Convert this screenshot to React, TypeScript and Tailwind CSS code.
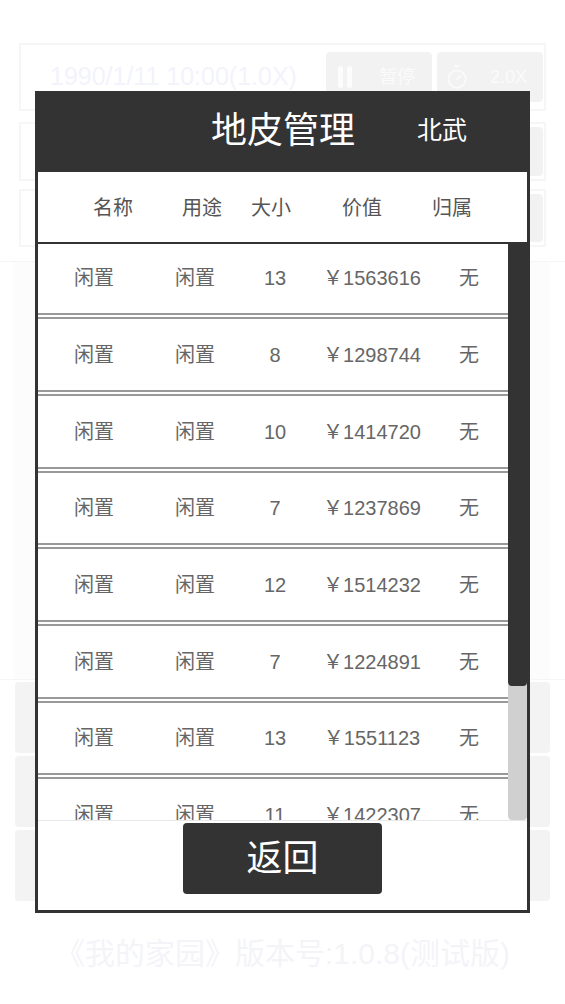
import { Timer } from 'lucide-react';

const rows = [
  { size: '13', price: '1563616' },
  { size: '8', price: '1298744' },
  { size: '10', price: '1414720' },
  { size: '7', price: '1237869' },
  { size: '12', price: '1514232' },
  { size: '7', price: '1224891' },
  { size: '13', price: '1551123' },
  { size: '11', price: '1422307' },
];

const font = 'font-["Liberation_Sans","Noto_Sans_CJK_SC",sans-serif]';

export default function App() {
  return (
    <div className={`relative h-[1004px] w-[565px] overflow-hidden bg-white ${font}`}>
      {/* Page behind the dialog, washed out */}
      <div className="flex flex-col pt-[43px]">
        <div className="mx-[19px] flex h-[68px] items-center justify-between border-2 border-[#f6f6f6] pl-[29px] pr-[1px]">
          <span className="text-[25px] text-[#f3f3fc]">1990/1/11 10:00(1.0X)</span>
          <div className="flex gap-[5px]">
            <div className="flex h-[50px] w-[106px] items-center gap-[27px] rounded bg-[#f2f2f2] pl-[12px] text-[#fbfbfb]">
              <div className="flex gap-[4px]">
                <div className="h-[22px] w-[5px] rounded-full bg-[#fcfcfc]" />
                <div className="h-[22px] w-[5px] rounded-full bg-[#fcfcfc]" />
              </div>
              <span className="text-[18px]">暂停</span>
            </div>
            <div className="flex h-[50px] w-[106px] items-center gap-[20px] rounded bg-[#f2f2f2] pl-[7px] text-[#fbfbfb]">
              <Timer size={26} strokeWidth={1.5} />
              <span className="text-[18px]">2.0X</span>
            </div>
          </div>
        </div>
        <div className="mx-[19px] mt-[11px] flex h-[59px] justify-end border-2 border-[#f6f6f6] py-[3px] pr-[1px]">
          <div className="w-[27px] rounded bg-[#f2f2f2]" />
        </div>
        <div className="mx-[19px] mt-[8px] flex h-[58px] justify-end border-2 border-[#f6f6f6] py-[3px] pr-[1px]">
          <div className="w-[27px] rounded bg-[#f2f2f2]" />
        </div>
        <div className="mt-[14px] h-[419px] border-y border-[#f5f5f5]">
          <div className="ml-[14px] h-full w-[536px] bg-[#fcfcfc]" />
        </div>
        <div className="ml-[15px] mt-[2px] flex w-[535px] flex-col gap-[3px]">
          <div className="h-[71px] rounded bg-[#f3f3f3]" />
          <div className="h-[71px] rounded bg-[#f3f3f3]" />
          <div className="h-[71px] rounded bg-[#f3f3f3]" />
        </div>
        <p className="mt-[33px] text-center text-[30px] leading-[40px] text-[#f4f4f8]">
          《我的家园》版本号:1.0.8(测试版)
        </p>
      </div>

      {/* Dialog */}
      <div className="absolute left-[35px] top-[91px] flex h-[822px] w-[495px] flex-col border-[3px] border-[#333333] bg-white">
        <div className="flex h-[78px] shrink-0 items-center bg-[#333333] pb-[5px] pl-[173px] text-white">
          <span className="text-[36px] leading-none">地皮管理</span>
          <span className="ml-[62px] text-[25px] leading-none">北武</span>
        </div>

        <div className="grid h-[72px] shrink-0 grid-cols-[82px_96px_42px_140px_40px] items-center border-b-2 border-[#333333] pl-[34px] pt-[1px] text-center text-[20px] text-[#555555]">
          <span>名称</span>
          <span>用途</span>
          <span>大小</span>
          <span>价值</span>
          <span>归属</span>
        </div>

        <div className="flex h-[576px] shrink-0">
          <div className="w-[470px] overflow-hidden">
            <div className="-mt-[1.5px]">
              {rows.map((row, i) => (
                <div
                  key={i}
                  className="grid h-[76.7px] grid-cols-[112px_90px_70px_124px_70px] items-center border-b-[6px] border-double border-[#999999] pt-[1px] text-center text-[20px] text-[#666666]"
                >
                  <span>闲置</span>
                  <span>闲置</span>
                  <span>{row.size}</span>
                  <span>￥{row.price}</span>
                  <span>无</span>
                </div>
              ))}
            </div>
          </div>
          <div className="w-[19px] rounded-b bg-[#d0d0d0]">
            <div className="h-[442px] rounded-b bg-[#333333]" />
          </div>
        </div>

        <div className="flex flex-1 justify-center border-t border-[#e8e8e8] pt-[2px]">
          <button className="h-[71px] w-[199px] rounded-[4px] bg-[#333333] text-[36px] leading-none text-white">
            返回
          </button>
        </div>
      </div>
    </div>
  );
}
